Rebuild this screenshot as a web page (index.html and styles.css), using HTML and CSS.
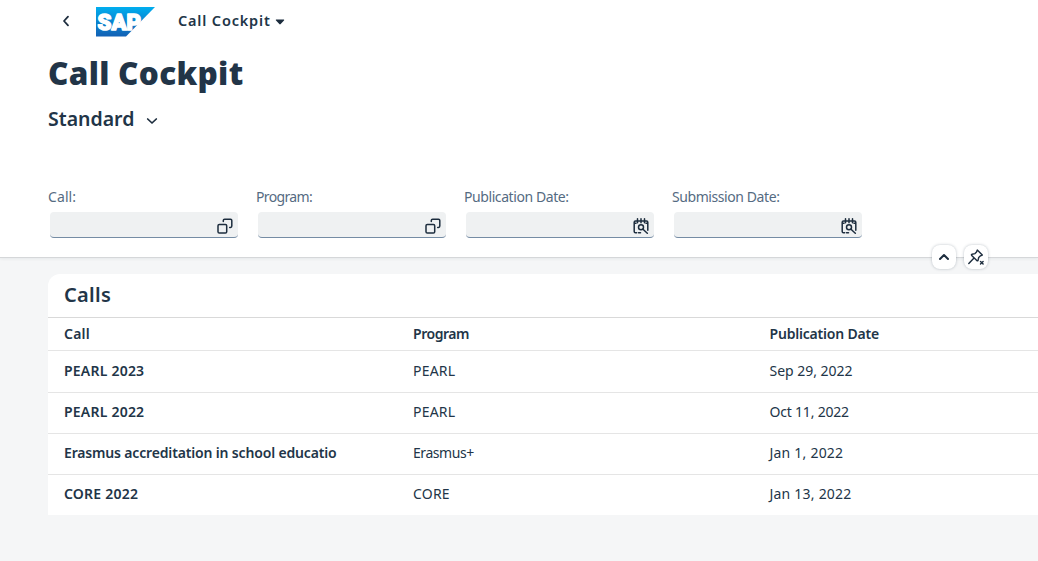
FILE: index.html
```html
<!DOCTYPE html>
<html lang="en">
<head>
<meta charset="utf-8">
<title>Call Cockpit</title>
<link rel="stylesheet" href="styles.css">
</head>
<body>
<svg class="defs" aria-hidden="true">
  <symbol id="value-help" viewBox="0 0 16 16">
    <rect x="1" y="6.5" width="8.700" height="8.500" rx="1.3"/>
    <path d="M6.3 3.6V2.5c0-.8.5-1.3 1.3-1.3h5.9c.8 0 1.3.5 1.3 1.3v5.600c0 .8-.5 1.300-1.300 1.300h-.8"/>
  </symbol>
  <symbol id="date-range" viewBox="0 0 16 16">
    <path d="M3.600 14.700H2.500c-.8 0-1.300-.5-1.300-1.300V4.200c0-.8.5-1.300 1.300-1.300h11c.8 0 1.300.5 1.300 1.300v8M4.500.8v4M8 .8v4M11.500.8v4M1.500 5.300h1.500M13 5.300h1.500M5.500 14.700h2"/>
    <circle cx="8" cy="9.200" r="2.500"/>
    <path d="M10 11.200l4.300 4"/>
  </symbol>
</svg>

<header class="header">
  <nav class="shell">
    <svg class="back" viewBox="0 0 8 12"><path d="M6 1.700L2 6l4 4.300"/></svg>
    <svg class="logo" viewBox="0 0 59 30" role="img">
      <defs><linearGradient id="blue" x1="0" y1="0" x2="0" y2="1"><stop offset="0" stop-color="#00aeef"/><stop offset=".55" stop-color="#0b80cc"/><stop offset="1" stop-color="#1261b5"/></linearGradient></defs>
      <path fill="url(#blue)" d="M0 0h59L30 29.500H0z"/>
      <text class="logo-text" x="1.500" y="22.500" textLength="43.500" lengthAdjust="spacingAndGlyphs">SAP</text>
    </svg>
    <span class="app-name">Call Cockpit</span>
    <svg class="caret" viewBox="0 0 10 6"><path d="M1.500.5h7c.7 0 .9.600.5 1L5.700 5.100c-.4.400-1 .4-1.400 0L1 1.500C.6 1.100.8.500 1.500.5z"/></svg>
  </nav>
  <h1 class="title">Call Cockpit</h1>
  <div class="variant"><span>Standard</span><svg class="chevron" viewBox="0 0 12 8"><path d="M1.700 2L6 6l4.300-4"/></svg></div>
  <div class="filters">
    <div class="filter"><label class="label open">Call:</label><div class="field"><svg class="icon"><use href="#value-help"/></svg></div></div>
    <div class="filter"><label class="label tight">Program:</label><div class="field"><svg class="icon"><use href="#value-help"/></svg></div></div>
    <div class="filter"><label class="label">Publication Date:</label><div class="field"><svg class="icon"><use href="#date-range"/></svg></div></div>
    <div class="filter"><label class="label">Submission Date:</label><div class="field"><svg class="icon"><use href="#date-range"/></svg></div></div>
  </div>
  <div class="header-actions">
    <button class="round"><svg class="icon" viewBox="0 0 16 16"><path class="thick" d="M4 10l4-4 4 4"/></svg></button>
    <button class="round"><svg class="icon pin" viewBox="0 0 16 16"><path d="M9.300 1.100l5 4.900-1.800.8-1.800 1.700-.6 2.700c-.2.700-.8.800-1.300.3L3.700 6.400c-.5-.5-.3-1.100.3-1.200l3-.6 1.500-1.600zM5.800 9.300L.8 14.500"/><path d="M12.500 12.500l2.600 2.600M15.100 12.500l-2.600 2.600"/></svg></button>
  </div>
</header>

<main class="content">
  <section class="card">
    <h2 class="card-title">Calls</h2>
    <div class="row head"><span class="caps">Call</span><span class="narrow">Program</span><span>Publication Date</span></div>
    <div class="row first"><b class="caps">PEARL 2023</b><span class="caps">PEARL</span><span class="date-wide">Sep 29, 2022</span></div>
    <div class="row"><b class="caps">PEARL 2022</b><span class="caps">PEARL</span><span>Oct 11, 2022</span></div>
    <div class="row"><b>Erasmus accreditation in school educatio</b><span class="narrow">Erasmus+</span><span class="caps">Jan 1, 2022</span></div>
    <div class="row"><b class="caps">CORE 2022</b><span class="caps">CORE</span><span class="caps">Jan 13, 2022</span></div>
  </section>
</main>
</body>
</html>
```
FILE: styles.css
```css
* { box-sizing: border-box; }
body {
  margin: 0;
  height: 561px;
  overflow: hidden;
  background: #f5f6f7;
  color: #223548;
  font: 14px/20px "Noto Sans", "Open Sans", sans-serif;
}
.defs { position: absolute; width: 0; height: 0; }
svg { display: block; flex: none; fill: none; stroke: #1d2d3e; stroke-width: 1.5; stroke-linecap: round; stroke-linejoin: round; }
.header {
  position: relative;
  height: 258px;
  padding-left: 48px;
  background: #fff;
  border-bottom: 1px solid #d5d7d9;
  box-shadow: 0 1px 3px rgba(34, 53, 72, .07);
}
.shell { display: flex; align-items: center; height: 42px; padding-left: 14px; }
.back { width: 8px; height: 12px; stroke-width: 1.8; }
.logo { width: 59px; height: 30px; margin: 1px 0 0 26px; stroke: none; }
.logo-text { fill: #fff; stroke: #fff; stroke-width: 1.500; font: 900 22px Roboto, sans-serif; }
.app-name { margin: -2px 0 0 23px; font-weight: 600; font-size: 14.500px; letter-spacing: .82px; }
.caret { width: 10px; height: 6px; margin: 1px 0 0 4px; fill: #1d2d3e; stroke: none; }
.title { margin: 8px 0 0; font-size: 31.500px; line-height: 46px; font-weight: 900; letter-spacing: .3px; }
.variant { display: flex; align-items: center; height: 28px; margin-top: 9px; font-size: 19.500px; font-weight: 600; }
.chevron { width: 12px; height: 8px; margin: 3px 0 0 12px; stroke-width: 1.7; }
.filters { display: flex; gap: 18px; margin-top: 54px; }
.filter { width: 190px; }
.label { display: block; height: 20px; color: #556b82; letter-spacing: -.42px; }
.label.open { letter-spacing: .1px; }
.label.tight { letter-spacing: -.65px; }
.field { display: flex; justify-content: flex-end; width: 188px; height: 26px; margin: 5px 0 0 2px; padding: 6px 5px 0 0; background: #eff1f2; border-bottom: 1px solid #758ca4; border-radius: 4px; }
.icon { width: 16px; height: 16px; }
.header-actions { position: absolute; top: 245px; left: 932px; display: flex; gap: 8px; }
.round { display: flex; align-items: center; justify-content: center; width: 24px; height: 24px; padding: 0; border: 0; border-radius: 8px; background: #fff; box-shadow: 0 0 3px rgba(34, 53, 72, .3); }
.thick { stroke-width: 2; }
.pin { stroke-width: 1.4; }
.content { padding: 16px 0 0 48px; }
.card { height: 241px; background: #fff; border-radius: 12px 0 0 0; }
.card-title { margin: 0; height: 43px; padding: 7px 16px; font-size: 20px; line-height: 28px; font-weight: 600; letter-spacing: .3px; }
.row { display: grid; grid-template-columns: 349px 356.500px 1fr; align-items: center; height: 41px; padding: 0 0 2px 16px; border-top: 1px solid #e5e5e5; letter-spacing: -.2px; }
.row b { font-weight: 600; letter-spacing: -.16px; }
.row .caps { letter-spacing: .22px; }
.row .narrow { letter-spacing: -.45px; }
.row .date-wide { letter-spacing: -.03px; }
.row.head { height: 33px; padding-bottom: 0; border-top-color: #d9d9d9; font-weight: 600; letter-spacing: -.2px; }
.row.first { height: 42px; }
```
